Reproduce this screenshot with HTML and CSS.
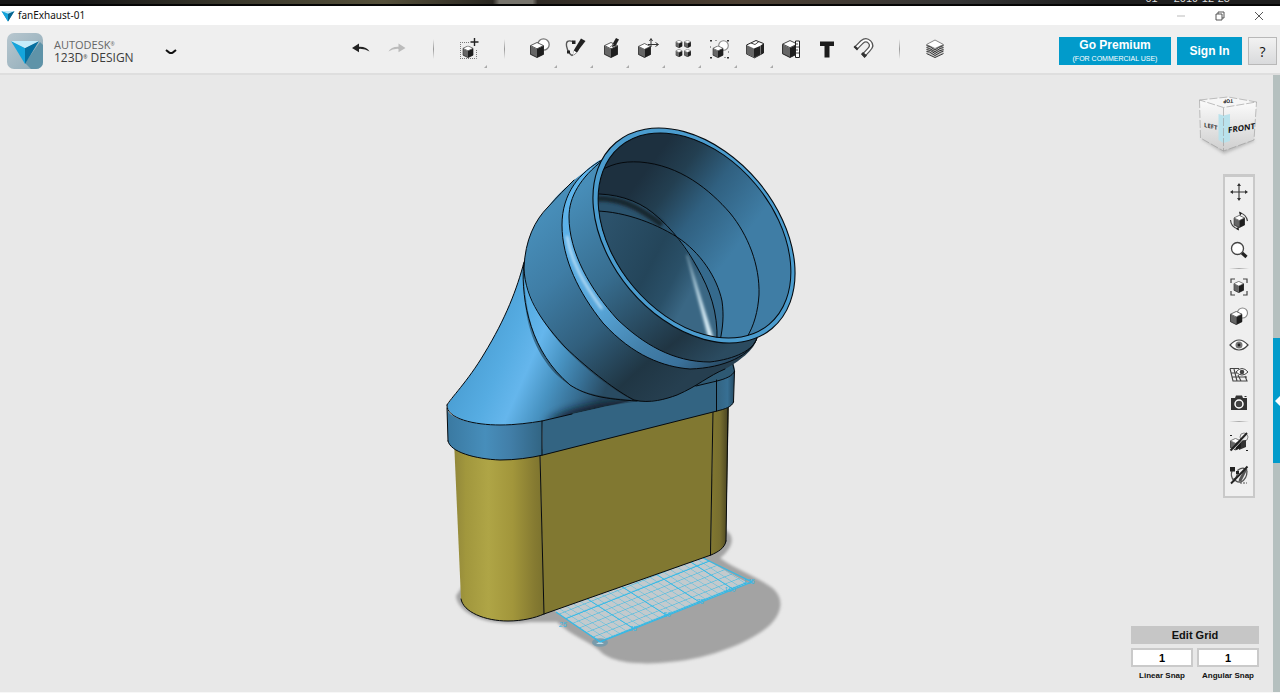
FILE: index.html
```html
<!DOCTYPE html>
<html lang="en">
<head>
<meta charset="utf-8">
<title>fanExhaust-01</title>
<link rel="stylesheet" href="styles.css">
</head>
<body>
<svg class="defs" aria-hidden="true">
  <symbol id="cube" viewBox="0 0 14 16">
    <path d="M7 .5 13.5 3.6 7 6.8.5 3.6Z" fill="#fff" stroke="#333" stroke-width=".8"/>
    <path d="M.2 3.8 7 7v8.8L.2 12.4Z" fill="#666"/>
    <path d="M13.8 3.8 7 7v8.8l6.8-3.4Z" fill="#1e1e1e"/>
    <path d="M.4 3.8v8.4L7 15.5l6.6-3.3V3.8" fill="none" stroke="#222" stroke-width=".8"/>
  </symbol>
  <symbol id="brand" viewBox="0 0 30 26">
    <path d="M1 2 15 6 29 2 15 25Z" fill="#0b83b5"/>
    <path d="M1 2 15 8V25Z" fill="#14a5dc"/>
    <path d="M29 2 15 8V25Z" fill="#06648f"/>
    <path d="M1 2H29L15 8Z" fill="#bfe8f7"/>
  </symbol>
</svg>

<div class="desktop-strip"><span class="clock">01</span><span class="clock">2019-12-25</span></div>

<header class="titlebar">
  <svg class="titlebar-icon" aria-hidden="true"><use href="#brand"/></svg>
  <span class="titlebar-name">fanExhaust-01</span>
  <div class="window-controls">
    <button aria-label="Minimize"><svg viewBox="0 0 10 10"><path d="M1 5H9" stroke="#bbb"/></svg></button>
    <button aria-label="Restore"><svg viewBox="0 0 10 10" fill="none" stroke="#444" stroke-width=".9"><path d="M1 3H7V9H1ZM3 3V1H9V7H7"/></svg></button>
    <button aria-label="Close"><svg viewBox="0 0 10 10"><path d="M1 1 9 9M9 1 1 9" stroke="#444" stroke-width=".9"/></svg></button>
  </div>
</header>

<nav class="toolbar" aria-label="Main toolbar">
  <div class="brand">
    <div class="brand-tile">
      <svg viewBox="0 0 36 36" aria-hidden="true">
        <path d="M33 9 36 12V36H24L18 30Z" fill="#5f93a8"/>
        <path d="M4 8 18 15V31Z" fill="#14a5dc"/><path d="M32 8 18 15V31Z" fill="#066f9f"/><path d="M4 8H32L18 15Z" fill="#c5ecfa"/>
      </svg>
    </div>
    <div class="brand-text"><span class="brand-maker">AUTODESK<sup>®</sup></span><span class="brand-product">123D<sup>®</sup> DESIGN</span></div>
    <button class="brand-menu" aria-label="Application menu"><svg viewBox="0 0 12 6"><path d="M1 1 4 3.4Q6 4.8 8 3.4L11 1" fill="none" stroke="#111" stroke-width="2"/></svg></button>
  </div>

  <div class="tools">
    <button class="tool" aria-label="Undo"><svg viewBox="0 0 28 28"><path d="M5 13 12 8.600V11.800Q20 11.600 22.500 16.500Q18 13.600 12 13.900V17.200Z" fill="#222"/></svg></button>
    <button class="tool" aria-label="Redo"><svg viewBox="0 0 28 28"><path d="M22.500 13 15.500 8.600V11.800Q8 11.600 5.500 16.500Q10 13.600 15.500 13.900V17.200Z" fill="#bbb"/></svg></button>
    <span class="tool-sep"></span>
    <button class="tool has-menu" aria-label="Transform"><svg viewBox="0 0 28 28"><path d="M5 7.500H15M5.500 7V23M5 23.500H21.500V14" fill="none" stroke="#777" stroke-dasharray="1 1"/><use href="#cube" x="7.500" y="10.500" width="11" height="12.500"/><path d="M19.500 3v8M15.500 7h8" stroke="#222" stroke-width="1.400"/></svg></button>
    <span class="tool-sep narrow"></span>
    <button class="tool has-menu" aria-label="Primitives"><svg viewBox="0 0 28 28"><circle cx="18.500" cy="9.500" r="5.700" fill="#fff" stroke="#777" stroke-width="1.300"/><use href="#cube" x="5" y="7" width="14" height="16"/></svg></button>
    <button class="tool has-menu" aria-label="Sketch"><svg viewBox="0 0 28 28"><path d="M12 6.500Q4.500 4 5.500 11Q7 18 11 20.500Q17 18 18 12" fill="none" stroke="#555" stroke-width="1.300"/><path d="M20 3.500 24.500 6 16 17 11.500 20.500 13 15Z" fill="#222"/><path d="m12.800 15.500 3 2-4 2.800Z" fill="#fff"/><path d="M11 5.500h3.500v3.500h-3.500ZM6 15.500h3v3H6Z" fill="#222"/></svg></button>
    <button class="tool has-menu" aria-label="Construct"><svg viewBox="0 0 28 28"><use href="#cube" x="7" y="7" width="14" height="16"/><path d="m15.500 9 3.500-6 3 1.500-3.500 6.500-3.500 1Z" fill="#222"/><path d="m13 12 4-3" stroke="#777"/></svg></button>
    <button class="tool has-menu" aria-label="Modify"><svg viewBox="0 0 28 28"><path d="M18 12V4M16.500 6 18 3.500 19.500 6M15 9.500h10M22.500 7.500l3 2-3 2" fill="none" stroke="#333"/><use href="#cube" x="5" y="8" width="13" height="15"/></svg></button>
    <button class="tool has-menu" aria-label="Pattern"><svg viewBox="0 0 28 28"><use href="#cube" x="6.500" y="5" width="7" height="8"/><use href="#cube" x="15" y="5" width="7" height="8"/><use href="#cube" x="6.500" y="14" width="7" height="8"/><use href="#cube" x="15" y="14" width="7" height="8"/></svg></button>
    <button class="tool has-menu" aria-label="Grouping"><svg viewBox="0 0 28 28"><path d="M5 5h2v1.500H5ZM22 5h2v1.500h-2ZM5 22h2v1.500H5ZM22 22h2v1.500h-2Z" fill="#333"/><path d="M10 5.500h2M19 22.500h2M23.500 16v2M5.500 11v2" stroke="#999"/><circle cx="18.500" cy="10.500" r="4.800" fill="#fff" stroke="#888" stroke-width="1.100"/><use href="#cube" x="7.500" y="10.500" width="11" height="12.500"/></svg></button>
    <button class="tool has-menu" aria-label="Combine"><svg viewBox="0 0 28 28"><path d="M5.500 10 15 5.500 22.500 8.500V18L13.500 22.800 5.500 19Z" fill="#fff" stroke="#222"/><path d="M5.500 10 13 13.500V22.500L5.500 19Z" fill="#666"/><path d="M13 13.500 19 11 22.500 8.500V18L13 22.800Z" fill="#222"/><path d="M19.500 11v8.500" stroke="#888" stroke-width=".8"/><path d="m10 8 4 1.500 4-3" fill="none" stroke="#444"/></svg></button>
    <button class="tool" aria-label="Measure"><svg viewBox="0 0 28 28"><use href="#cube" x="5" y="5" width="16" height="18"/><path d="M18.500 6H22.500V22.500H18.500Z" fill="#fff" stroke="#222"/><path d="M19 9h2M19 12h3M19 15h2M19 18h3" stroke="#333" stroke-width=".9"/></svg></button>
    <button class="tool" aria-label="Text"><svg viewBox="0 0 28 28"><path d="M7 6.500H21V11H16.500V22.500H11.500V11H7Z" fill="#1c1c1c"/></svg></button>
    <button class="tool" aria-label="Snap"><svg viewBox="0 0 28 28"><path d="M6.500 13.500 13 7Q17 3.500 20.500 7Q24 10.500 20 14.500L14 21" fill="none" stroke="#555" stroke-width="4.500"/><path d="M7 13 13 7Q17 3.500 20.500 7Q24 10.500 20 14.500L14.500 20.500" fill="none" stroke="#fff" stroke-width="2"/><path d="m4.500 12 3.500 3.500L9.500 13.500 6 10.500ZM12 19l3.500 4L18 20.500 14 17Z" fill="#333"/></svg></button>
    <span class="tool-sep"></span>
    <button class="tool" aria-label="Material"><svg viewBox="0 0 28 28"><path d="M5.500 9.500V18L14 22.500 22.500 18V9.500Z" fill="#ccc"/><path d="M5.500 9.500 14 5 22.500 9.500 14 13.500Z" fill="#fff" stroke="#888"/><g fill="none" stroke="#333" stroke-width="1"><path d="m5.500 10.500 4 1.500 4.500 3 3.500-2.500 5-2M5.500 12.500l3 1 5.500 3.200 5-3.200 3.500-1M5.500 14.500l4 1 4.500 3 4-2.500 4.500-1.500M5.500 16.500l3 .5 5.500 3.500 5-3 3.500-1.500M5.500 18.500 14 22.500l8.500-4"/></g></svg></button>
  </div>

  <div class="account">
    <button class="premium"><span class="premium-title">Go Premium</span><span class="premium-note">(FOR COMMERCIAL USE)</span></button>
    <button class="sign-in">Sign In</button>
    <button class="help" aria-label="Help">?</button>
  </div>
</nav>

<main class="workspace">
  <section class="stage" aria-label="3D view">
    <svg class="scene" viewBox="0 75 1273 617" preserveAspectRatio="xMidYMid meet" role="img" aria-label="Fan exhaust model">
      <defs>
        <filter id="soft" x="-20%" y="-20%" width="140%" height="140%"><feGaussianBlur stdDeviation="1.800"/></filter>
        <filter id="softer" x="-50%" y="-50%" width="200%" height="200%"><feGaussianBlur stdDeviation="4"/></filter>
        <filter id="glint" x="-100%" y="-20%" width="300%" height="140%"><feGaussianBlur stdDeviation="1.500"/></filter>
        <pattern id="minor" width="1" height="1" patternUnits="userSpaceOnUse" patternTransform="matrix(6.6 -2.65 -7 -4.500 600 642)"><path d="M0 0H1M0 0V1" stroke="#45bce2" stroke-width=".14" fill="none"/></pattern>
        <pattern id="major" width="5" height="5" patternUnits="userSpaceOnUse" patternTransform="matrix(6.6 -2.65 -7 -4.500 600 642)"><path d="M0 0H5M0 0V5" stroke="#35b9e6" stroke-width=".3" fill="none"/></pattern>
        <linearGradient id="yLeft"><stop offset="0" stop-color="#91873a"/><stop offset=".13" stop-color="#a1973d"/><stop offset=".38" stop-color="#afa546"/><stop offset=".65" stop-color="#a2963b"/><stop offset=".9" stop-color="#857a31"/><stop offset="1" stop-color="#7b722e"/></linearGradient>
        <linearGradient id="yRight"><stop offset="0" stop-color="#827830"/><stop offset=".5" stop-color="#776e2f"/><stop offset="1" stop-color="#443f1f"/></linearGradient>
        <linearGradient id="collar"><stop offset="0" stop-color="#3a79a1"/><stop offset=".4" stop-color="#478ebb"/><stop offset=".65" stop-color="#427fa9"/><stop offset="1" stop-color="#316482"/></linearGradient>
        <linearGradient id="collarEnd"><stop offset="0" stop-color="#336482"/><stop offset=".6" stop-color="#376f93"/><stop offset="1" stop-color="#264c64"/></linearGradient>
        <linearGradient id="loft" gradientUnits="userSpaceOnUse" x1="475" y1="345" x2="601" y2="400"><stop offset="0" stop-color="#4ca0d5"/><stop offset=".23" stop-color="#56ace2"/><stop offset=".42" stop-color="#65b6ec"/><stop offset=".62" stop-color="#4893c2"/><stop offset=".82" stop-color="#376f94"/><stop offset="1" stop-color="#294b62"/></linearGradient>
        <linearGradient id="tube" gradientUnits="userSpaceOnUse" x1="535" y1="225" x2="680" y2="385"><stop offset="0" stop-color="#478db8"/><stop offset=".25" stop-color="#3f7da5"/><stop offset=".55" stop-color="#315f7d"/><stop offset=".82" stop-color="#203644"/><stop offset="1" stop-color="#263f50"/></linearGradient>
        <linearGradient id="neck" gradientUnits="userSpaceOnUse" x1="580" y1="190" x2="715" y2="360"><stop offset="0" stop-color="#478db8"/><stop offset=".4" stop-color="#376d8f"/><stop offset=".82" stop-color="#203543"/><stop offset="1" stop-color="#2b4b60"/></linearGradient>
        <linearGradient id="ring" gradientUnits="userSpaceOnUse" x1="580" y1="180" x2="740" y2="365"><stop offset="0" stop-color="#5eb4eb"/><stop offset=".45" stop-color="#58a6d9"/><stop offset=".68" stop-color="#4380aa"/><stop offset=".83" stop-color="#3a719b"/><stop offset="1" stop-color="#233d50"/></linearGradient>
        <linearGradient id="mouth" gradientUnits="userSpaceOnUse" x1="650" y1="165" x2="745" y2="236"><stop offset="0" stop-color="#1d303f"/><stop offset=".25" stop-color="#233f51"/><stop offset=".55" stop-color="#306080"/><stop offset="1" stop-color="#3f7da5"/></linearGradient>
        <linearGradient id="floor" gradientUnits="userSpaceOnUse" x1="605" y1="225" x2="700" y2="275"><stop offset="0" stop-color="#2c526b"/><stop offset=".55" stop-color="#24455a"/><stop offset=".8" stop-color="#2a5068"/><stop offset="1" stop-color="#3a6784"/></linearGradient>
        <clipPath id="loftClip"><path d="M447 408C450 399 468 381 484 354C506 318 517 289 524 262L640 300 717 381 542 421C515 427 454 430 447 408Z"/></clipPath>
        <clipPath id="mouthClip"><ellipse cx="694.5" cy="235.5" rx="116" ry="79.700" transform="rotate(50 694.5 235.5)"/></clipPath>
      </defs>

      <path filter="url(#soft)" fill="#a3a3a3" d="M456 596C459 617 493 627 530 622L557 622C572 637 588 640 600 651C612 664 645 665 670 662C711 659 755 640 771 624C786 608 781 594 771 587C755 576 737 570 720 558C733 548 735 537 727 531L700 500 480 560Z"/>
      <path d="M600 642 748 583 703 558 640 540 540 600 556 612Z" fill="#c3cacd"/>
      <path d="M600 642 748 583 703 558 640 540 540 600 556 612Z" fill="url(#minor)"/>
      <path d="M600 642 748 583 703 558 640 540 540 600 556 612Z" fill="url(#major)"/>
      <path d="M556 612 600 642 752 582 703 558" fill="none" stroke="#35b9e6" stroke-width="1.300"/>
      <g class="grid-label"><text x="559" y="627">25</text><text x="629" y="631">25</text><text x="663" y="617">50</text><text x="696" y="604">75</text><text x="724" y="592">100</text><text x="743" y="584">125</text></g>
      <ellipse cx="600" cy="642.5" rx="8" ry="4.200" fill="#6d98ad" opacity=".8"/><path d="M596 644 600 641.500 604 644Z" fill="#c5dce6"/><path d="M596 639 600 642 605 640" fill="none" stroke="#35b9e6" stroke-width="1.500"/>

      <path d="M454 440 461 599C463 612 485 621 508 621C522 621 535 618 544 614L540 450Z" fill="url(#yLeft)"/>
      <path d="M540 450 713 408 711 555 544 614Z" fill="#817831"/>
      <path d="M713 408 729 400 726 541C725 548 718 552 711 555Z" fill="url(#yRight)"/>
      <path class="edge" d="M461 599C463 612 485 621 508 621C522 621 535 618 544 614L711 555C718 552 725 548 726 541M540 455 544 614M713 410 710.500 555M728 405 726 541"/>

      <path d="M630 400 690 372 732 361C735 366 735 370 734 373C730 378 725 379 717 385L640 406Z" fill="#2e5973"/>
      <path d="M447 408C448 419 475 425 500 425C515 425 530 423 542 421L543 455C530 458 515 460 500 460C475 459 450 452 448 441Z" fill="url(#collar)"/>
      <path d="M717 381C725 379 733 376 734.500 371L733.500 402C732 407 725 409 717 411Z" fill="url(#collarEnd)"/>
      <path d="M447 406C450 399 468 381 484 354C506 318 517 289 524 262L640 300 660 404 610 409 542 421C515 427 454 430 447 406Z" fill="url(#loft)"/>
      <g clip-path="url(#loftClip)">
        <path d="M545 424C562 408 590 403 650 398V414L590 418Z" fill="#0d1922" filter="url(#softer)" opacity=".85"/>
      </g>
      <path d="M542 421 590 410C610 405 630 402 650 400L717 380V411L543 455Z" fill="#336482"/>
      <path class="edge" d="M447 405C450 399 468 381 484 354C506 318 517 289 524 262M447 405C446 419 475 425 500 425C515 425 530 423 542 421L572 414M448 441C450 452 475 459 500 460C515 460 530 458 543 455L717 411C725 409 732 407 733.500 402M447 408 448 441M542 421V455M716.500 380V411M696 386 717 381C725 379 733 376 734.500 371L733.500 402M732 361 734.500 371"/>

      <path d="M524 268C525 240 535 220 548 207C558 193 566 188 574 180L600 160 757 338C755 350 738 362 725 369C708 376 698 386 677 395C666 400 650 402 637 401C597 400 570 390 552 370C530 344 522 312 524 268Z" fill="url(#tube)"/>
      <path d="M524 277C531 300 540 320 560 343C585 370 612 389 632 400C603 397 585 394 570 385C538 358 527 325 524 277Z" fill="url(#loft)"/>
      <path class="edge" d="M574 180C566 188 558 196 548 207C535 220 525 240 524 268C525 300 545 325 565 347C590 371 618 392 634 400C650 404 666 399 677 395C698 386 708 376 725 369M523.500 265C521 302 531 352 570 385C587 396 605 399 637 401"/>

      <path d="M600 160C580 172 562 193 562 225C562 259 579 293 603 323C633 356 664 367 690 369C725 368 751 355 757 338L740 330 610 160Z" fill="url(#ring)"/>
      <path d="M567 236C571 262 584 284 602 309" fill="none" stroke="#d9efff" stroke-width="2" filter="url(#glint)"/>
      <path d="M603 160C580 178 569 197 569 217C569 252 590 289 617 319C643 344 673 362 710 362C735 359 754 350 757 338L740 330 610 160Z" fill="url(#neck)"/>
      <path class="edge" d="M602 160C580 172 562 193 562 225C562 259 579 293 603 323C633 356 664 367 690 369C725 368 751 355 757 338M603 160C580 178 569 197 569 217C569 252 590 289 617 319C643 344 673 362 710 362C735 359 754 350 757 338"/>

      <ellipse cx="694" cy="235.500" rx="121.400" ry="83.800" transform="rotate(50 694 235.500)" fill="#4b9cce" stroke="#050b10" stroke-width="1.100"/>
      <g clip-path="url(#mouthClip)">
        <path d="M590 125H800V345H590Z" fill="url(#mouth)"/>
        <path d="M590 194C615 193 637 200 653 213C673 229 687 249 697 267C710 290 718 312 717 345L600 350Z" fill="#2b536d"/>
        <path d="M590 199C620 196 640 208 662 225" fill="none" stroke="#17252f" stroke-width="6" filter="url(#soft)"/>
        <path d="M590 211C618 210 650 221 677 237C687 250 705 282 711 294C717 306 718 320 717 345H600Z" fill="url(#floor)"/>
        <path d="M677 237C700 252 717 277 722 301C724 315 723 327 720 342L717 342C719 315 710 290 697 267Z" fill="#356a8d"/>
        <path d="M687 255 709 340 713 337Z" fill="#dff2fa" stroke="#b9dbe9" stroke-width=".5" filter="url(#glint)"/>
        <path class="edge" d="M595 174C610 164 622 161 640 162C680 165 710 190 730 213C748 235 760 265 759 295C758 311 754 326 747 337M590 194C615 193 637 200 653 213C673 229 687 249 697 267C710 290 718 312 717 341M590 211C620 210 653 222 677 237C700 252 717 277 722 301C724 315 723 327 720 341"/>
      </g>
      <ellipse cx="694.5" cy="235.500" rx="116" ry="79.700" transform="rotate(50 694.5 235.500)" class="edge"/>
    </svg>

    <div class="overlay">
      <svg class="view-cube" viewBox="0 0 62 66" role="img" aria-label="View cube">
        <defs><linearGradient id="faceShade" x1="0" y1="0" x2="0" y2="1"><stop offset="0" stop-color="#fbfbfb"/><stop offset="1" stop-color="#cfcfcf"/></linearGradient></defs>
        <path d="M4 44 27 59 58 46 50 40H10Z" fill="#aaa" filter="url(#soft)" opacity=".7"/>
        <path d="M2.500 5 31 2 59.500 7 26.500 12.500Z" fill="#f6f6f6"/>
        <path d="M2.500 5 26.500 12.500V56L3.500 43Z" fill="url(#faceShade)"/>
        <path d="M59.500 7 26.500 12.500V56L57 45Z" fill="url(#faceShade)"/>
        <path d="M21.500 19 26.500 20.500 33 19V46L26.500 48 21.500 45Z" fill="#b9e2ec"/>
        <path d="M2.500 5 31 2 59.500 7 26.500 12.500ZM2.500 5 3.500 43 26.500 56 57 45 59.500 7M26.500 13V56" fill="none" stroke="#999" stroke-width=".6" stroke-dasharray="8 2"/>
        <text class="cube-face-small" transform="translate(7 32) skewY(12)">LEFT</text>
        <text class="cube-face" transform="translate(31 38) skewY(-9)">FRONT</text>
        <text class="cube-face-top" transform="translate(36 4) rotate(176)">TOP</text>
      </svg>

      <div class="palette" role="toolbar" aria-label="Navigation">
        <button aria-label="Pan"><svg viewBox="0 0 20 20"><path d="M10 2V18M2 10H18" stroke="#333" stroke-width="1.100"/><path d="M10 1 12 4H8ZM10 19 12 16H8ZM1 10 4 8V12ZM19 10 16 8V12Z" fill="#333"/></svg></button>
        <button aria-label="Orbit"><svg viewBox="0 0 20 20"><use href="#cube" x="4.500" y="4" width="11.500" height="13"/><path d="M1.500 9Q2 16 9 18M11 2Q17 3 18.500 10" fill="none" stroke="#444" stroke-width="1.200"/><path d="m10 .5 3 1.500-2 3ZM10 19.500 7 18l2.500-2.500Z" fill="#222"/></svg></button>
        <button aria-label="Zoom"><svg viewBox="0 0 20 20"><circle cx="8.500" cy="8.500" r="6" fill="#fff" stroke="#444" stroke-width="1.300"/><path d="m13 13 4.500 4" stroke="#222" stroke-width="3.200"/></svg></button>
        <span class="palette-sep"></span>
        <button aria-label="Fit"><svg viewBox="0 0 20 20"><use href="#cube" x="4.500" y="4" width="10.500" height="12"/><path d="M2 6V2H6M14 2H18V6M2 14V18H6M14 18H18V14" fill="none" stroke="#444" stroke-width="1.200"/></svg></button>
        <button aria-label="Materials and outlines"><svg viewBox="0 0 20 20"><circle cx="13.500" cy="7" r="5" fill="#fff" stroke="#888" stroke-width="1.100"/><use href="#cube" x="1" y="5" width="12.500" height="14"/></svg></button>
        <button aria-label="Visibility"><svg viewBox="0 0 20 20"><path d="M1 10Q10 0 19 10Q10 20 1 10Z" fill="#fff" stroke="#444" stroke-width="1.200"/><circle cx="10" cy="10" r="3.500" fill="#777"/><circle cx="10" cy="10" r="1.400" fill="#222"/></svg></button>
        <button aria-label="Grid visibility"><svg viewBox="0 0 20 20"><path d="M1 4.500H10M1 4.500 4 17H18L16 12M2 9H8M3 13H18M5 5 8 17M9 11 12 17" fill="none" stroke="#444" stroke-width="1.100"/><path d="M7 8Q13 1 19 8Q13 14 7 8Z" fill="#fff" stroke="#444"/><circle cx="13" cy="8" r="2.300" fill="#444"/></svg></button>
        <button aria-label="Screenshot"><svg viewBox="0 0 20 20"><path d="M2 5H6L7 2.500H13L14 5H18V17H2Z" fill="#333"/><circle cx="10" cy="11" r="4" fill="#444" stroke="#fff" stroke-width="1.500"/><path d="M15.500 3.500h2" stroke="#333"/></svg></button>
        <span class="palette-sep"></span>
        <button class="tall" aria-label="Hide solids"><svg viewBox="0 0 20 20"><circle cx="15" cy="5" r="4" fill="#eee" stroke="#888"/><path d="M10 9 17 8V15L10 18Z" fill="#333"/><use href="#cube" x="1" y="6" width="11" height="12.500"/><path d="M3 19 19 2" stroke="#ddd" stroke-width="1"/><path d="M1.500 18.500 18 1" stroke="#222" stroke-width="1.900"/><path d="M1 3h2v1H1ZM17 18h2v1h-2Z" fill="#222"/></svg></button>
        <button class="tall" aria-label="Hide sketches"><svg viewBox="0 0 20 20"><path d="M3 6Q1 11 5 16Q9 10 9 5Q15 1 18 6Q18 14 12 17Q7 18 5 13" fill="none" stroke="#555" stroke-width="1.300"/><path d="M1 2h5v4.500H1ZM7 6h3v3H7Z" fill="#222"/><path d="m10 14 6-11 2.500 1-6 12-3 1Z" fill="#555"/><path d="M2 18.500 18.500 1.500" stroke="#222" stroke-width="1.900"/><path d="M11 18h7" stroke="#555" stroke-dasharray="2 1"/></svg></button>
      </div>

      <div class="snap">
        <button class="snap-edit">Edit Grid</button>
        <div class="snap-fields">
          <div class="snap-field"><input id="linear" type="text" value="1"><label for="linear">Linear Snap</label></div>
          <div class="snap-field"><input id="angular" type="text" value="1"><label for="angular">Angular Snap</label></div>
        </div>
      </div>
    </div>
  </section>

  <aside class="rail"><button class="rail-tab" aria-label="Open parts panel"><svg viewBox="0 0 5 10"><path d="M5 0V10L0 5Z" fill="#fff"/></svg></button></aside>
</main>
</body>
</html>
```

FILE: styles.css
```css
* { box-sizing: border-box; }

html, body { height: 100%; }

body {
  margin: 0;
  display: flex;
  flex-direction: column;
  background: #e8e8e8;
  color: #111;
  font-family: "Liberation Sans", Arial, sans-serif;
  overflow: hidden;
}

button {
  margin: 0;
  padding: 0;
  border: 0;
  background: none;
  color: inherit;
  font-family: inherit;
  cursor: pointer;
}

svg { display: block; }

.defs { position: absolute; width: 0; height: 0; }

/* Window frame */
.desktop-strip {
  flex: none;
  display: flex;
  justify-content: flex-end;
  align-items: flex-end;
  gap: 16px;
  height: 6px;
  padding: 0 50px 2px 0;
  overflow: hidden;
  border-bottom: 2px solid #050505;
  background: linear-gradient(90deg, #171717 0 6%, #3a382c 18%, #55503a 30%, #2a2721 38.500%, #77746c 39% 41.600%, #302b25 42%, #4d4033 58%, #353535 75%, #1e1e1e 86%);
}

.clock { color: #ddd; font-size: 11px; line-height: 8px; }

.titlebar {
  flex: none;
  display: flex;
  align-items: center;
  gap: 3px;
  height: 19px;
  padding-left: 1px;
  background: #fff;
}

.titlebar-icon { width: 14px; height: 12px; }

.titlebar-name { font: 10px/19px "Noto Sans", sans-serif; }

.window-controls { display: flex; margin-left: auto; padding-right: 2px; }

.window-controls button {
  display: grid;
  place-items: center;
  width: 39px;
  height: 19px;
}

.window-controls svg { width: 10px; height: 10px; }

/* Toolbar */
.toolbar {
  flex: none;
  display: grid;
  grid-template-columns: 343px 1fr auto;
  height: 50px;
  border-bottom: 2px solid #dedede;
  background: #efefef;
}

.brand { display: flex; align-items: center; padding: 3px 0 0 7px; }

.brand-tile {
  width: 36px;
  height: 36px;
  border-radius: 7px;
  overflow: hidden;
  background: linear-gradient(135deg, #b8c7cf, #8fabb8);
}

.brand-text {
  display: flex;
  flex-direction: column;
  width: 90px;
  margin-left: 11px;
  font-family: "Open Sans", sans-serif;
  font-size: 12px;
  line-height: 13px;
  color: #3c3c3c;
  white-space: nowrap;
}

.brand-maker { font-size: 11px; color: #666; }
.brand-product { font-weight: 500; }

.brand-text sup { font-size: 5px; line-height: 0; vertical-align: 3px; }

.brand-menu { width: 12px; margin-left: 21px; padding: 3px 0 0; }
.brand-menu svg { width: 12px; height: 6px; }

.tools { display: flex; }

.tool {
  position: relative;
  display: grid;
  place-items: center;
  width: 36px;
  height: 48px;
}

.tool svg { width: 28px; height: 28px; }

.has-menu::after {
  content: "";
  position: absolute;
  right: 0;
  bottom: 5px;
  border-left: 3px solid transparent;
  border-bottom: 3px solid #aaa;
}

.tool-sep {
  align-self: center;
  width: 36px;
  height: 20px;
  background: linear-gradient(#efefef, #999, #efefef) center / 1px 100% no-repeat;
}

.tool-sep.narrow { width: 34px; }

.account { display: flex; align-items: center; gap: 6px; padding: 4px 3px 0 0; }

.premium, .sign-in { background: #019bcb; color: #fff; font-weight: bold; }

.premium {
  display: flex;
  flex-direction: column;
  align-items: center;
  width: 112px;
  height: 28px;
}

.premium-title { font-size: 12px; line-height: 17px; }
.premium-note { font-size: 7px; line-height: 9px; font-weight: normal; }

.sign-in { width: 65px; height: 28px; font-size: 12px; }

.help {
  width: 29px;
  height: 28px;
  border: 1px solid #b8b8b8;
  background: linear-gradient(#f2f2f2, #d9dadc);
  font: 14px "Open Sans", sans-serif;
}

/* Workspace */
.workspace { flex: 1; display: flex; min-height: 0; border-bottom: 1px solid #f7f7f7; }

.stage { position: relative; flex: 1; min-width: 0; }

.scene { position: absolute; inset: 0; width: 100%; height: 100%; }

.edge { fill: none; stroke: #05090d; stroke-width: 1; stroke-linecap: round; }

.grid-label { fill: #35b9e6; font: italic 7px "Liberation Sans", sans-serif; }

.overlay {
  position: relative;
  display: flex;
  flex-direction: column;
  align-items: flex-end;
  height: 100%;
  padding: 20px 14px 11px 0;
}

.view-cube { flex: none; width: 62px; height: 66px; }

.cube-face { font: bold 8px "Open Sans", sans-serif; fill: #111; }
.cube-face-small { font: bold 6px "Open Sans", sans-serif; fill: #333; }
.cube-face-top { font: bold 5px "Open Sans", sans-serif; fill: #222; }

.palette {
  flex: none;
  display: flex;
  flex-direction: column;
  width: 32px;
  margin: 13px 4px 0 0;
  padding: 0 0 5px;
  border: 3px solid #c9c9c9;
  border-width: 3px 2px 2px;
  background: #efefef;
}

.palette button { display: grid; place-items: center; width: 28px; height: 29px; }
.palette button.tall { height: 33px; }
.palette svg { width: 20px; height: 20px; }

.palette-sep {
  height: 8px;
  background: linear-gradient(90deg, #efefef, #aaa, #efefef) center / 20px 1px no-repeat;
}

.snap { width: 128px; margin-top: auto; font-weight: bold; }

.snap-edit {
  display: block;
  width: 100%;
  height: 18px;
  background: #c6c6c6;
  font-size: 11px;
  font-weight: bold;
}

.snap-fields { display: grid; grid-template-columns: 1fr 1fr; gap: 4px; padding-top: 4px; }

.snap-field { display: flex; flex-direction: column; align-items: center; }

.snap-field input {
  width: 100%;
  height: 19px;
  padding: 0;
  border: 2px solid #cacaca;
  background: #fff;
  font: bold 11px "Liberation Sans", sans-serif;
  text-align: center;
}

.snap-field label { padding-top: 3px; font-size: 8px; line-height: 11px; white-space: nowrap; }

.rail { flex: none; width: 7px; background: #b5c0bf; }

.rail-tab {
  display: flex;
  align-items: center;
  justify-content: flex-end;
  width: 7px;
  height: 125px;
  margin-top: 263px;
  background: #019bcb;
}

.rail-tab svg { width: 5px; height: 10px; }
```
